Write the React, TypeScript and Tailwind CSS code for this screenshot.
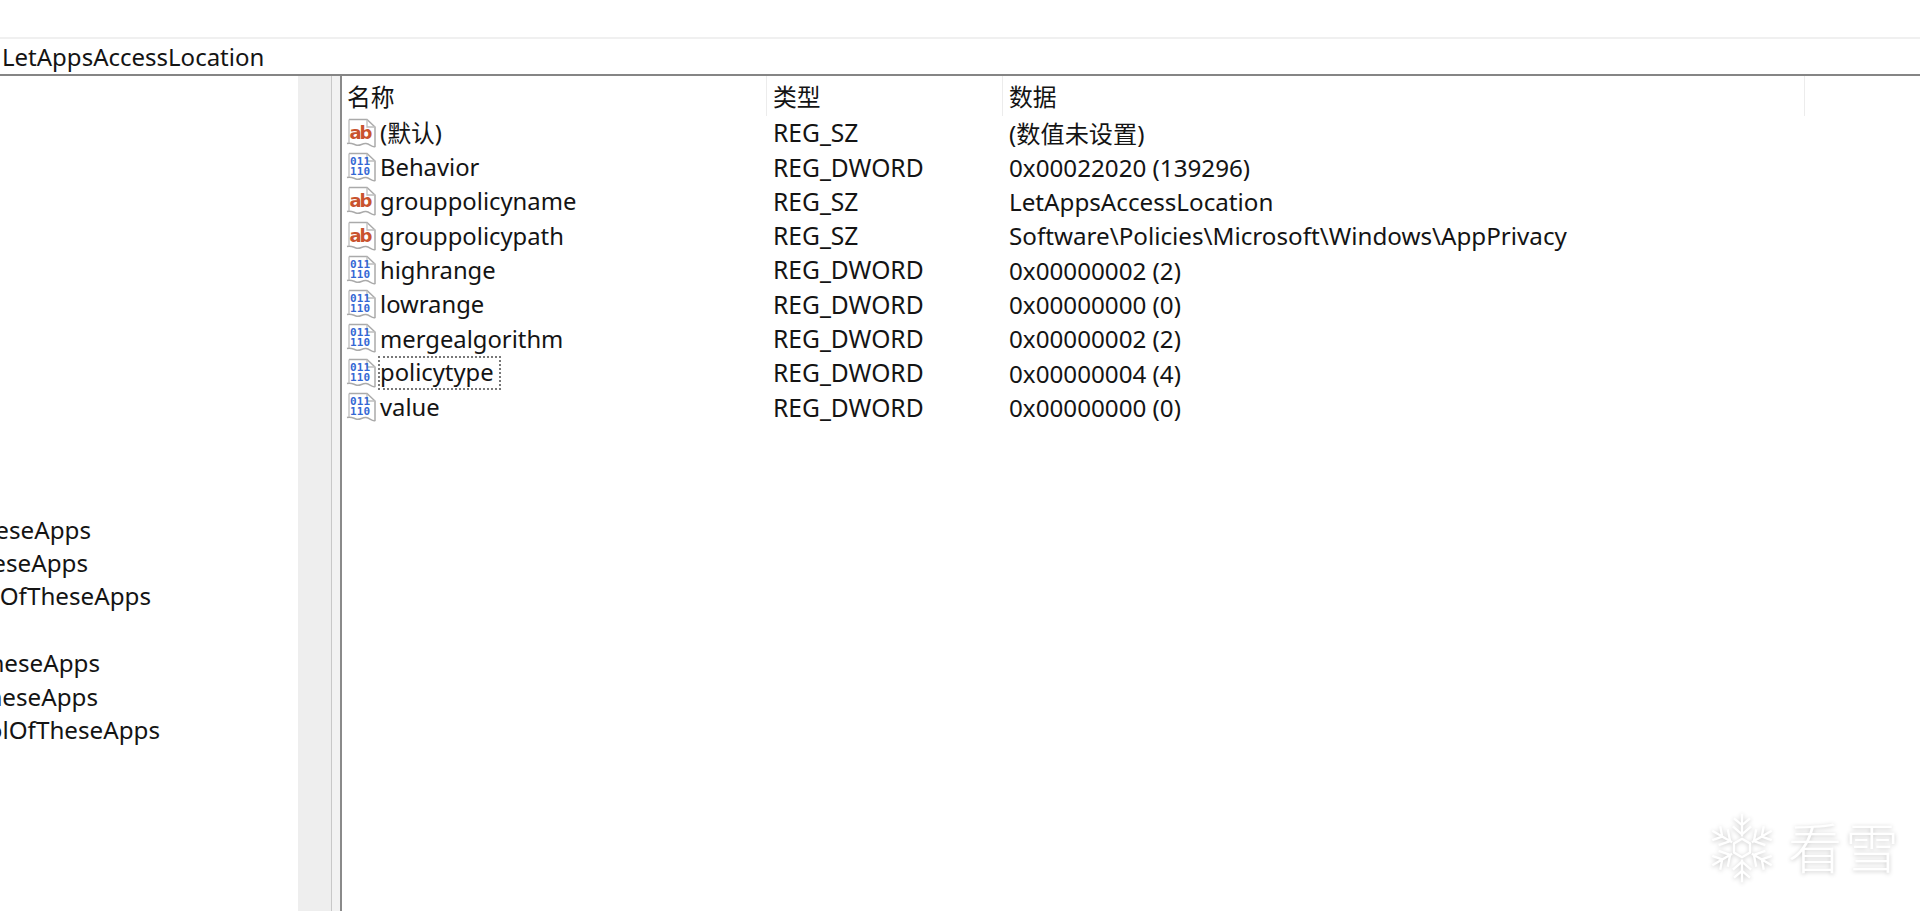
const font = "font-['Noto_Sans','Noto_Sans_CJK_SC',sans-serif]"

const rows = [
  { icon: 'sz', name: '(默认)', type: 'REG_SZ', data: '(数值未设置)' },
  { icon: 'bin', name: 'Behavior', type: 'REG_DWORD', data: '0x00022020 (139296)' },
  { icon: 'sz', name: 'grouppolicyname', type: 'REG_SZ', data: 'LetAppsAccessLocation' },
  { icon: 'sz', name: 'grouppolicypath', type: 'REG_SZ', data: 'Software\\Policies\\Microsoft\\Windows\\AppPrivacy' },
  { icon: 'bin', name: 'highrange', type: 'REG_DWORD', data: '0x00000002 (2)' },
  { icon: 'bin', name: 'lowrange', type: 'REG_DWORD', data: '0x00000000 (0)' },
  { icon: 'bin', name: 'mergealgorithm', type: 'REG_DWORD', data: '0x00000002 (2)' },
  { icon: 'bin', name: 'policytype', type: 'REG_DWORD', data: '0x00000004 (4)', focused: true },
  { icon: 'bin', name: 'value', type: 'REG_DWORD', data: '0x00000000 (0)' },
]

const keys = [
  { text: 'heseApps', width: 'w-[91px]' },
  { text: 'heseApps', width: 'w-[88px]' },
  { text: 'OfTheseApps', width: 'w-[151px]' },
  { text: '', width: 'w-[91px]' },
  { text: 'heseApps', width: 'w-[100px]' },
  { text: 'heseApps', width: 'w-[98px]' },
  { text: 'olOfTheseApps', width: 'w-[160px]' },
]

function RegIcon({ kind }: { kind: string }) {
  return (
    <svg width="31" height="31" viewBox="0 0 31 31" className="shrink-0">
      <path
        d="M3 1.5H21L29 9V28.5C26 29.5 24 26 20 25.5C16 25 14 28.5 10 27C7 26 5 24.5 1 25.5"
        fill="#fff"
        stroke="#aaaaaa"
        strokeWidth="1.5"
      />
      <path d="M3 1.5V25M21 1.5V9H29" fill="none" stroke="#bdbdbd" strokeWidth="1.3" />
      {kind === 'sz' ? (
        <text x="3.5" y="20.5" fontFamily="'DejaVu Sans', sans-serif" fontSize="18" fontWeight="700" fill="#c9532e" textLength="23">
          ab
        </text>
      ) : (
        <g fontFamily="'DejaVu Sans Mono', monospace" fontSize="11" fontWeight="700" fill="#3568d4">
          <text x="4" y="12.5" textLength="20">011</text>
          <text x="4" y="22.5" textLength="20">110</text>
        </g>
      )}
    </svg>
  )
}

function Snowflake() {
  const arm = 'M32 22V2M32 12L25 6M32 12L39 6M32 20L24 13M32 20L40 13'
  return (
    <svg width="76" height="80" viewBox="0 0 64 70" className="shrink-0">
      <g fill="none" stroke="#fff" strokeWidth="2" transform="translate(0 3)">
        <path d="M32 24L39 28V36L32 40L25 36V28Z" />
        {[0, 60, 120, 180, 240, 300].map((a) => (
          <path key={a} d={arm} transform={`rotate(${a} 32 32)`} />
        ))}
      </g>
    </svg>
  )
}

export default function App() {
  return (
    <div className={`relative flex h-[911px] w-[1920px] flex-col overflow-hidden bg-white text-[#141414] ${font}`}>
      <div className="h-[37px] shrink-0" />
      <div className="h-[2px] shrink-0 bg-[#f0f0f0]" />
      {/* Address bar */}
      <div className="flex h-[35px] shrink-0 items-center pl-[2px] text-[24px]">LetAppsAccessLocation</div>
      <div className="h-[2px] shrink-0 bg-[#858585]" />

      <div className="flex min-h-0 flex-1">
        {/* Key tree, scrolled to the right */}
        <div className="flex w-[298px] shrink-0 flex-col pt-[437px] text-[24.2px]">
          {keys.map((key, i) => (
            <div key={i} className={`flex h-[33.4px] items-center justify-end overflow-hidden whitespace-nowrap ${key.width}`}>
              {key.text}
            </div>
          ))}
        </div>
        <div className="w-[33px] shrink-0 bg-[#eeeeee]" />
        <div className="w-[9px] shrink-0 border-l border-[#c8c8c8] bg-[#f2f2f2]" />
        <div className="w-[2px] shrink-0 bg-[#8a8a8a]" />

        {/* Values list */}
        <div className="min-w-0 flex-1 pl-[4px] text-[23.8px]">
          <div className="flex h-[40px] items-center">
            <div className="flex h-full w-[421px] shrink-0 items-center border-r border-[#ececec] pt-[4px] pl-[1px]">名称</div>
            <div className="flex h-full w-[236px] shrink-0 items-center border-r border-[#ececec] pt-[4px] pl-[6px]">类型</div>
            <div className="flex h-full w-[802px] shrink-0 items-center border-r border-[#ececec] pt-[4px] pl-[6px]">数据</div>
          </div>
          {rows.map((row) => (
            <div key={row.name} className="flex h-[34.3px] items-center whitespace-nowrap">
              <div className="flex w-[421px] shrink-0 items-center">
                <RegIcon kind={row.icon} />
                {row.focused ? (
                  <span className="ml-[1px] flex h-[34px] items-center border-2 border-dotted border-[#777] pr-[5px]">{row.name}</span>
                ) : (
                  <span className="ml-[3px] pt-[1px]">{row.name}</span>
                )}
              </div>
              <div className="w-[236px] shrink-0 pt-[1px] pl-[6px] text-[24.6px]">{row.type}</div>
              <div className="pt-[1px] pl-[6px] text-[24.2px]">{row.data}</div>
            </div>
          ))}
        </div>
      </div>

      {/* Watermark */}
      <div className="absolute top-[808px] left-[1704px] flex items-center gap-[8px] text-[54px] leading-none font-light text-white [filter:drop-shadow(0_1px_2px_rgba(0,0,0,0.22))]">
        <Snowflake />
        <span className="tracking-[3px]">看雪</span>
      </div>
    </div>
  )
}
